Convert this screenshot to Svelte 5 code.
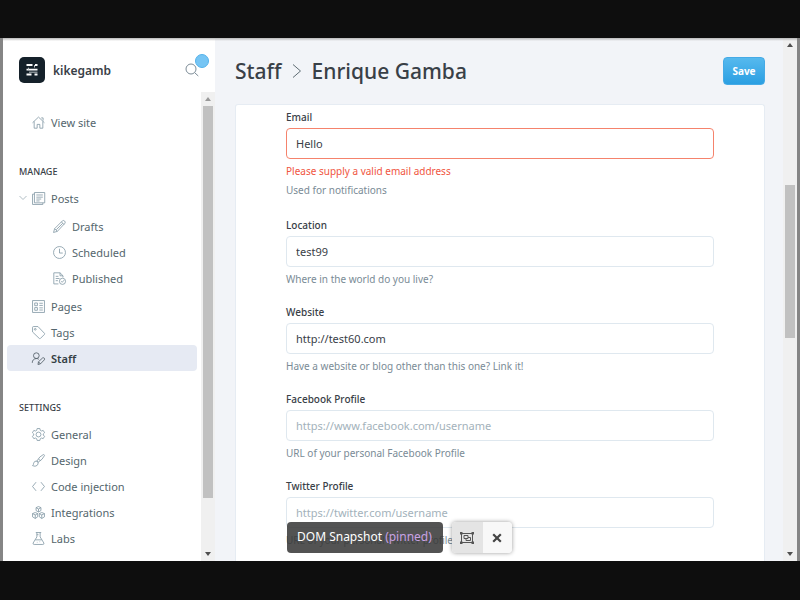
<script>
  const groups = [
    { title: '', items: [{ label: 'View site', icon: 'home' }] },
    {
      title: 'Manage',
      items: [
        {
          label: 'Posts',
          icon: 'posts',
          children: [
            { label: 'Drafts', icon: 'pencil' },
            { label: 'Scheduled', icon: 'clock' },
            { label: 'Published', icon: 'published' }
          ]
        },
        { label: 'Pages', icon: 'pages' },
        { label: 'Tags', icon: 'tag' },
        { label: 'Staff', icon: 'staff', active: true }
      ]
    },
    {
      title: 'Settings',
      items: [
        { label: 'General', icon: 'gear' },
        { label: 'Design', icon: 'brush' },
        { label: 'Code injection', icon: 'code' },
        { label: 'Integrations', icon: 'cubes' },
        { label: 'Labs', icon: 'flask' }
      ]
    }
  ];

  const icons = {
    home: 'M1 12.5 12 2l11 10.5M4 10v12.500h5.500v-7h5v7H20V10M17 3.500h3.500v5',
    posts: 'M4.500 1h19v19h-19zM4.500 4H1v19h19v-3M8 5.500h12M8 9.500h12M8 13h9M8 16.500h6',
    pencil: 'M1 23l2-7L17.500 1.500q2-1.500 4 .5t.5 4L8 21zM3 16l5 5M15.500 3.500l5 5M6 18 18 6',
    clock: 'M12 1a11 11 0 1 0 0 22 11 11 0 0 0 0-22zM12 5v8h6',
    published:
      'M10 22H1.500V1.500H13L18.500 7v3M13 1.500V7h5.500M5 8h5M5 12h7M5 16h4M17.500 11.500a5.700 5.700 0 1 0 0 11.400 5.700 5.700 0 0 0 0-11.400zM15 17l2 2 3.500-4',
    pages: 'M1 1h22v22H1zM5 5.500h5v5H5zM5 14h5v5H5zM13.500 6H20M13.500 10H20M13.500 14.500H20M13.500 18.500H20',
    tag: 'M1 2.500V11l12.500 12q1 .5 2 0l7.500-7.500q.7-1 0-2L11 1H3Q1 1 1 2.500zM6 4.500a1.600 1.600 0 1 0 0 3.200 1.600 1.600 0 0 0 0-3.200z',
    staff:
      'M8 1.500a5 5 0 0 0 0 10.500 5 5 0 0 0 0-10.500zM.5 20q0-7 7.500-8 3 0 4.500 1.500M11 23l1-5 7.500-7q2-1 3.300.5 1 1.500 0 3L15.500 22zM12 18l3.500 4',
    gear: 'M12 7.500a4.500 4.500 0 1 0 0 9 4.500 4.500 0 0 0 0-9zM9.500 1h5l.8 3.300 2.200 1.200 3.200-1 2.500 4.200-2.400 2.300v2l2.400 2.400-2.500 4.200-3.200-1-2.200 1.200-.8 3.200h-5l-.8-3.200-2.200-1.200-3.200 1L.8 15.400 3.200 13v-2L.8 8.700l2.500-4.200 3.200 1 2.200-1.200z',
    brush: 'M9 13Q14 4 21 1q2 0 2 2-3 7-12 12.500zM9 13q-5-.5-6 4 0 3-2 4.500 5 2.500 8.500-.5 2.500-2.500 1.500-5.500zM12 9l4 4',
    code: 'M7.500 4 1 12l6.500 8M16.500 4 23 12l-6.500 8',
    cubes:
      'M12 1l4.500 2v5.500L12 11 7.500 8.500V3zM7.500 3l4.500 2.500L16.500 3M12 5.500V11M6 12l4.500 2v6L6 23l-5-3v-6zM1 14l5 2.500 4.500-2.500M6 16.500V23M18 12l5 2v6l-5 3-4.500-3v-6zM13.500 14l4.500 2.500 5-2.500M18 16.500V23',
    flask: 'M7 1h10M9 1v8L2 20.500Q1.500 23 4 23h16q2.500 0 2-2.500L15 9V1M6 14.500h12M9 5h3M9 19h1M14 18h1'
  };

  const fields = [
    {
      id: 'email',
      label: 'Email',
      value: 'Hello',
      error: 'Please supply a valid email address',
      help: 'Used for notifications'
    },
    { id: 'location', label: 'Location', value: 'test99', help: 'Where in the world do you live?' },
    {
      id: 'website',
      label: 'Website',
      value: 'http://test60.com',
      help: 'Have a website or blog other than this one? Link it!'
    },
    {
      id: 'facebook',
      label: 'Facebook Profile',
      value: '',
      placeholder: 'https://www.facebook.com/username',
      help: 'URL of your personal Facebook Profile'
    },
    {
      id: 'twitter',
      label: 'Twitter Profile',
      value: '',
      placeholder: 'https://twitter.com/username',
      help: 'URL of your personal Twitter profile'
    }
  ];
</script>

{#snippet icon(name)}
  <svg class="icon" viewBox="0 0 24 24" aria-hidden="true"><path d={icons[name]} /></svg>
{/snippet}

{#snippet link(item, nested)}
  <a class="nav-link" class:nested class:active={item.active} href="#{item.icon}">
    {#if item.children}
      <svg class="chevron" viewBox="0 0 8 6" aria-hidden="true"><path d="M.5 1 4 4.500 7.500 1" /></svg>
    {/if}
    {@render icon(item.icon)}
    <span>{item.label}</span>
  </a>
{/snippet}

{#snippet scrollbar(kind)}
  <div class="scrollbar {kind}" aria-hidden="true">
    <svg class="arrow" viewBox="0 0 14 14"><path d="M4 9 7 5l3 4z" /></svg>
    <div class="track"><div class="thumb"></div></div>
    <svg class="arrow down" viewBox="0 0 14 14"><path d="M4 5h6L7 9z" /></svg>
  </div>
{/snippet}

<div class="screen">
  <div class="app">
    <aside>
      <header class="brand">
        <svg class="logo" viewBox="0 0 26 26" aria-hidden="true">
          <rect width="26" height="26" rx="5" fill="#15212a" />
          <path
            d="M7.500 8h6M16 8h2.500M7.500 12.700h11M7.500 17.500h5M15.500 17.500h3"
            stroke="#fff"
            stroke-width="1.800"
          />
          <path d="M15.500 8v2.500M9.500 12.700v-2M10 15.200h8.500" stroke="#b9bfc3" stroke-width="1" />
        </svg>
        <strong>kikegamb</strong>
        <button class="search" aria-label="Search">
          <svg viewBox="0 0 14 14" aria-hidden="true">
            <circle cx="6" cy="6" r="5" /><path d="M9.700 9.700 13.300 13" />
          </svg>
          <i class="dot"></i>
        </button>
      </header>
      <div class="nav-area">
        <nav>
          {#each groups as group}
            <section>
              {#if group.title}<h2>{group.title}</h2>{/if}
              {#each group.items as item}
                {@render link(item, false)}
                {#if item.children}
                  <div class="children">
                    {#each item.children as child}{@render link(child, true)}{/each}
                  </div>
                {/if}
              {/each}
            </section>
          {/each}
        </nav>
        {@render scrollbar('side')}
      </div>
    </aside>

    <main>
      <header class="page-head">
        <h1>
          <a href="#staff">Staff</a>
          <svg viewBox="0 0 10 14" aria-hidden="true"><path d="M1 .5 8.500 7 1 13.500" /></svg>
          <span>Enrique Gamba</span>
        </h1>
        <button class="save">Save</button>
      </header>
      <form class="card">
        {#each fields as field}
          <div class="field" class:invalid={field.error}>
            <label for={field.id}>{field.label}</label>
            <input id={field.id} type="text" value={field.value} placeholder={field.placeholder} />
            {#if field.error}<p class="error">{field.error}</p>{/if}
            <p>{field.help}</p>
          </div>
        {/each}
      </form>
    </main>
    {@render scrollbar('page')}

    <div class="snapshot">
      <div class="tip">DOM Snapshot <span>(pinned)</span></div>
      <div class="tools">
        <button class="pressed" aria-label="Toggle snapshot">
          <svg viewBox="0 0 14 12" aria-hidden="true">
            <path d="M1.500 1.500h11v9h-11zM4 3.500h4v3H4zM6 6.500v2h4.500v-3H8" />
            <path class="solid" d="M0 0h2.500v2.500H0zM11.500 0H14v2.500h-2.500zM0 9.500h2.500V12H0zM11.500 9.500H14V12h-2.500z" />
          </svg>
        </button>
        <button aria-label="Close">
          <svg class="cross" viewBox="0 0 10 10" aria-hidden="true"><path d="M1.200 1.200l7.600 7.600M8.800 1.200 1.200 8.800" /></svg>
        </button>
      </div>
    </div>
  </div>
</div>

<style>
  :global(body) {
    margin: 0;
    background: #0e0e0e;
  }
  .screen {
    box-sizing: border-box;
    height: 100vh;
    padding: 38px 0 39px;
    background: #0e0e0e;
    font-family: 'Noto Sans', 'Open Sans', sans-serif;
    font-size: 11px;
    color: #394047;
  }
  .screen :global(*) {
    box-sizing: border-box;
  }
  svg {
    display: block;
    flex: none;
    fill: none;
  }
  a {
    color: inherit;
    text-decoration: none;
  }
  button {
    padding: 0;
    border: 0;
    font: inherit;
  }
  .app {
    position: relative;
    display: flex;
    height: 100%;
    overflow: hidden;
    border: solid #858585;
    border-width: 0 3px;
    background: #f2f4f8;
  }
  .app::after {
    content: '';
    position: absolute;
    inset: 0 0 auto;
    height: 3px;
    background: linear-gradient(#b8b8b8, transparent);
  }
  aside {
    display: flex;
    flex-direction: column;
    flex: none;
    width: 212px;
    background: #fff;
  }
  .brand {
    display: flex;
    align-items: center;
    flex: none;
    height: 54px;
    padding: 10px 16px 0;
  }
  .logo {
    width: 26px;
    height: 26px;
  }
  .brand strong {
    flex: 1;
    margin-left: 8px;
    font-size: 12px;
    font-weight: 600;
  }
  .search {
    position: relative;
    background: none;
  }
  .search svg {
    width: 14px;
    height: 14px;
    stroke: #7c8b96;
  }
  .dot {
    position: absolute;
    top: -9px;
    right: -10px;
    width: 14px;
    height: 14px;
    border: 1px solid #55b2ea;
    border-radius: 50%;
    background: #76c5f4;
  }
  .nav-area {
    display: flex;
    flex: 1;
    min-height: 0;
  }
  nav {
    flex: 1;
    padding: 17px 4px 0;
    overflow: hidden;
  }
  section {
    margin-bottom: 29px;
  }
  h2 {
    margin: 0 0 5px;
    padding-left: 12px;
    font-size: 9px;
    line-height: 16px;
    font-weight: 500;
    text-transform: uppercase;
  }
  .nav-link {
    position: relative;
    display: flex;
    align-items: center;
    gap: 6px;
    height: 26px;
    padding-left: 25px;
    border-radius: 4px;
    color: #54666d;
  }
  .nested {
    padding-left: 46px;
  }
  .children {
    padding: 2px 0;
  }
  .active {
    background: #e6eaf3;
    color: #343f44;
    font-weight: 600;
  }
  .icon {
    width: 13px;
    height: 13px;
    overflow: visible;
    stroke: #8299a5;
    stroke-width: 1.500;
  }
  .active .icon {
    stroke: #4c5961;
  }
  .chevron {
    position: absolute;
    left: 12px;
    width: 8px;
    height: 6px;
    stroke: #b0bdc4;
  }
  .scrollbar {
    display: flex;
    flex-direction: column;
    flex: none;
    width: 14px;
    background: #f0f0f0;
  }
  .arrow {
    width: 14px;
    height: 14px;
    fill: #4f4f4f;
  }
  .side .arrow:first-child {
    fill: #999;
  }
  .track {
    flex: 1;
    padding: 0 2px;
  }
  .thumb {
    height: 89%;
    background: #c1c1c1;
  }
  .page .track {
    display: flex;
    flex-direction: column;
  }
  .page .thumb {
    height: 31%;
    margin-top: 133px;
  }
  main {
    display: flex;
    flex-direction: column;
    flex: 1;
    min-width: 0;
    padding: 0 18px 0 20px;
  }
  .page-head {
    display: flex;
    align-items: center;
    justify-content: space-between;
    flex: none;
    height: 66px;
  }
  h1 {
    display: flex;
    align-items: center;
    gap: 10px;
    margin: 0;
    font-size: 21px;
    line-height: 30px;
    font-weight: 500;
  }
  h1 svg {
    width: 10px;
    height: 14px;
    stroke: #5e6c73;
  }
  .save {
    width: 42px;
    height: 28px;
    border: 1px solid #45aae6;
    border-radius: 4px;
    background: linear-gradient(#56b9ee, #2b9fe2);
    color: #fff;
    font-size: 10px;
    font-weight: 700;
  }
  .card {
    flex: 1;
    min-height: 0;
    padding: 4px 50px 0;
    overflow: hidden;
    border: 1px solid #e6ecf3;
    border-bottom: 0;
    border-radius: 3px 3px 0 0;
    background: #fff;
  }
  .field {
    display: flex;
    flex-direction: column;
    margin-bottom: 17px;
  }
  .field.invalid {
    margin-bottom: 19px;
  }
  label {
    margin-bottom: 3px;
    font-size: 10px;
    line-height: 16px;
    font-weight: 500;
  }
  input {
    width: 100%;
    height: 31px;
    padding: 0 9px;
    border: 1px solid #dfe8ef;
    border-radius: 4px;
    outline: 0;
    background: #fff;
    color: #394047;
    font: inherit;
  }
  input::placeholder {
    color: #a3b2bb;
    opacity: 1;
  }
  .invalid input {
    border-color: #f5836c;
  }
  p {
    margin: 4px 0 0;
    color: #7a8b96;
    font-size: 10px;
    line-height: 16px;
  }
  .error {
    color: #f05541;
  }
  .error + p {
    margin-top: 3px;
  }
  .snapshot {
    position: absolute;
    bottom: 8px;
    left: 284px;
    display: flex;
    align-items: center;
    gap: 9px;
    font-size: 12px;
  }
  .tip {
    height: 31px;
    padding: 0 11px 0 10px;
    border-radius: 4px;
    background: rgba(55, 55, 55, 0.860);
    color: #fff;
    line-height: 29px;
    white-space: nowrap;
  }
  .tip span {
    color: #c9a2e4;
  }
  .tools {
    display: flex;
    height: 31px;
    overflow: hidden;
    border-radius: 4px;
    background: #f8f8f8;
    box-shadow: 0 0 4px rgba(0, 0, 0, 0.400);
  }
  .tools button {
    display: grid;
    place-items: center;
    width: 29px;
    background: #f8f8f8;
  }
  .tools .pressed {
    width: 31px;
    background: #e4e4e4;
  }
  .tools svg {
    width: 14px;
    height: 12px;
    stroke: #555;
  }
  .tools .solid {
    fill: #555;
    stroke: none;
  }
  .tools .cross {
    width: 10px;
    height: 10px;
    stroke: #444;
    stroke-width: 2.200;
  }
</style>
